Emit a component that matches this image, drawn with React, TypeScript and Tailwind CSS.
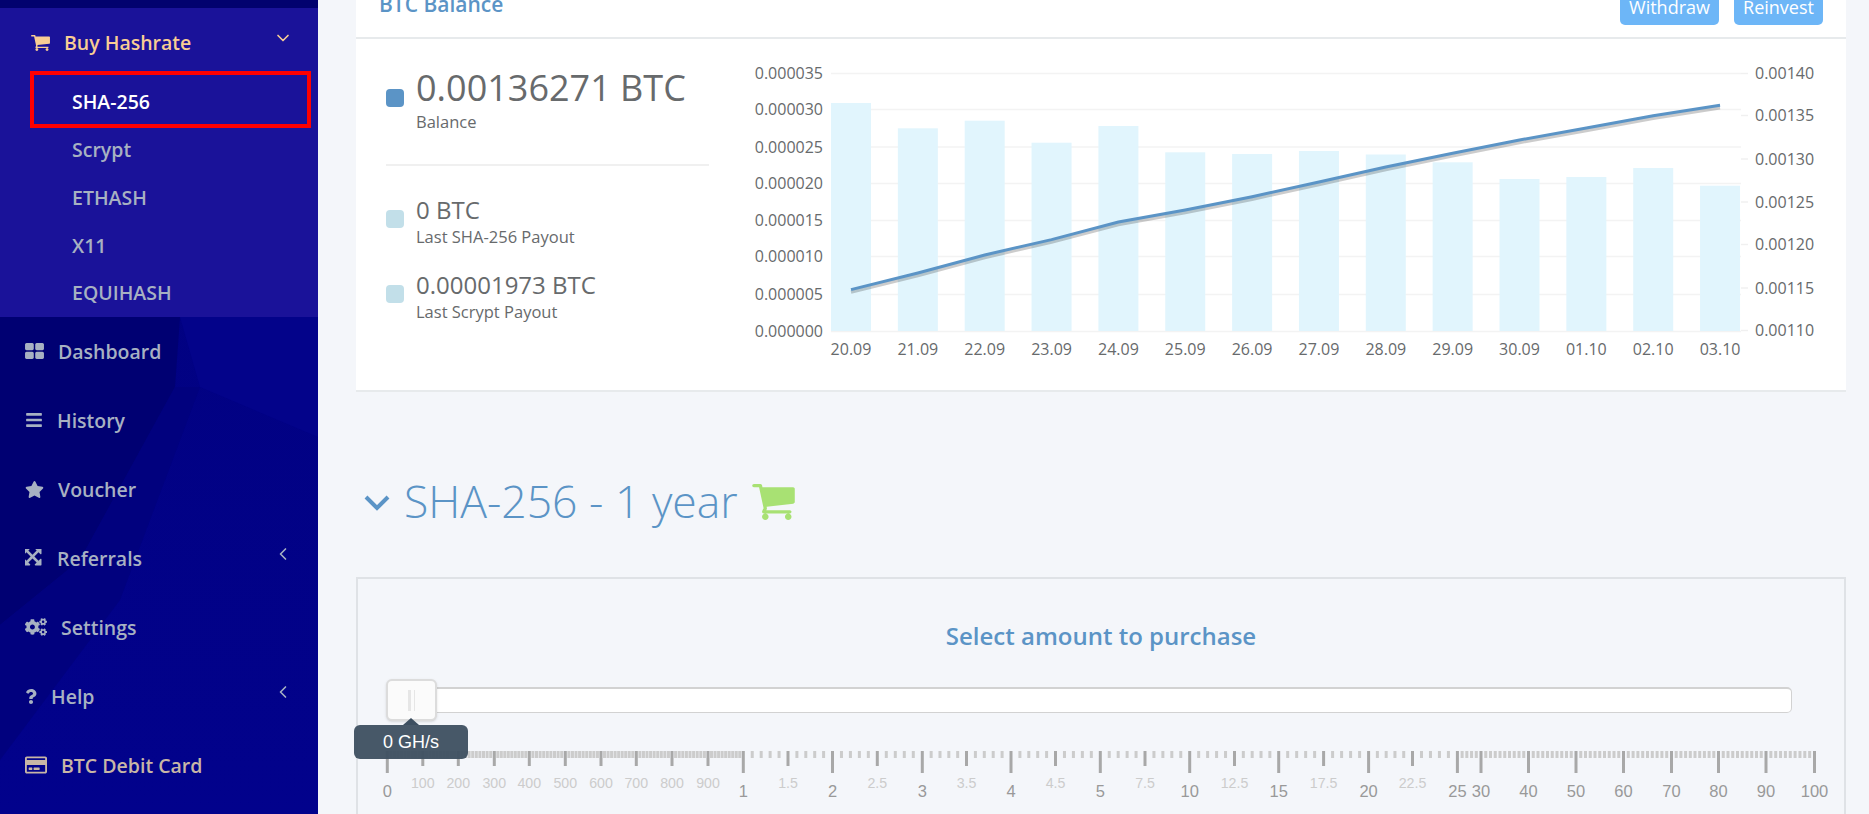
import type { ReactNode } from 'react';
import { ChevronDown, ChevronLeft } from 'lucide-react';
import { FaCogs, FaBars, FaQuestion, FaRegCreditCard, FaStar } from 'react-icons/fa';

const CART_PATH =
  'M704 1536q0 52-38 90t-90 38-90-38-38-90 38-90 90-38 90 38 38 90zm896 0q0 52-38 90t-90 38-90-38-38-90 38-90 90-38 90 38 38 90zm128-1088v512q0 24-16.5 42.5t-40.5 21.5l-1044 122q13 60 13 70 0 16-24 64h920q26 0 45 19t19 45-19 45-45 19h-1024q-26 0-45-19t-19-45q0-11 8-31.5t16-36 21.5-40 15.5-29.5l-177-823h-204q-26 0-45-19t-19-45 19-45 45-19h256q16 0 28.5 6.5t19.5 15.5 13 24.5 8 26 5.5 29.5 4.5 26h1201q26 0 45 19t19 45z';

function CartIcon({ className }: { className: string }) {
  return (
    <svg viewBox="64 256 1664 1408" fill="currentColor" className={className}>
      <path d={CART_PATH} />
    </svg>
  );
}

function GridIcon({ className }: { className: string }) {
  return (
    <svg viewBox="64 128 1664 1408" fill="currentColor" className={className}>
      <path d="M832 1024v384q0 52-38 90t-90 38h-512q-52 0-90-38t-38-90v-384q0-52 38-90t90-38h512q52 0 90 38t38 90zm0-768v384q0 52-38 90t-90 38h-512q-52 0-90-38t-38-90v-384q0-52 38-90t90-38h512q52 0 90 38t38 90zm896 768v384q0 52-38 90t-90 38h-512q-52 0-90-38t-38-90v-384q0-52 38-90t90-38h512q52 0 90 38t38 90zm0-768v384q0 52-38 90t-90 38h-512q-52 0-90-38t-38-90v-384q0-52 38-90t90-38h512q52 0 90 38t38 90z" />
    </svg>
  );
}

function ArrowsIcon({ className }: { className: string }) {
  return (
    <svg viewBox="128 128 1536 1536" fill="currentColor" className={className}>
      <path d="M1283 413l-355 355 355 355 144-144q29-31 70-14 39 17 39 59v448q0 26-19 45t-45 19h-448q-42 0-59-40-17-39 14-69l144-144-355-355-355 355 144 144q31 30 14 69-17 40-59 40h-448q-26 0-45-19t-19-45v-448q0-42 40-59 39-17 69 14l144 144 355-355-355-355-144 144q-19 19-45 19-12 0-24-5-40-17-40-59v-448q0-26 19-45t45-19h448q42 0 59 40 17 39-14 69l-144 144 355 355 355-355-144-144q-31-30-14-69 17-40 59-40h448q26 0 45 19t19 45v448q0 42-39 59-13 5-25 5-26 0-45-19z" />
    </svg>
  );
}

const SUB_ITEMS = ['SHA-256', 'Scrypt', 'ETHASH', 'X11', 'EQUIHASH'];

const NAV_ITEMS: { label: string; icon: ReactNode; arrow?: boolean; tan?: boolean }[] = [
  { label: 'Dashboard', icon: <GridIcon className="w-[19px] h-[16px] mr-[14px]" /> },
  { label: 'History', icon: <FaBars className="w-[18px] h-[18px] mr-[14px]" /> },
  { label: 'Voucher', icon: <FaStar className="w-[19px] h-[19px] mr-[14px]" /> },
  { label: 'Referrals', icon: <ArrowsIcon className="w-[18px] h-[18px] mr-[14px]" />, arrow: true },
  { label: 'Settings', icon: <FaCogs className="w-[22px] h-[22px] mr-[14px]" /> },
  { label: 'Help', icon: <FaQuestion className="w-[12px] h-[15px] mr-[14px]" />, arrow: true },
  { label: 'BTC Debit Card', icon: <FaRegCreditCard className="w-[22px] h-[22px] mr-[14px]" />, tan: true },
];

const DATES = ['20.09', '21.09', '22.09', '23.09', '24.09', '25.09', '26.09', '27.09', '28.09', '29.09', '30.09', '01.10', '02.10', '03.10'];
const BAR_TOPS = [103, 128.3, 120.7, 142.7, 126, 152.3, 154, 151, 154.5, 162.3, 179, 177, 168, 185.7];
const LINE_YS = [289.6, 273, 255, 239.6, 222, 210, 196.7, 182, 167, 153.3, 140, 128, 115.7, 105.3];
const LEFT_AXIS: [string, number][] = [
  ['0.000035', 73.5],
  ['0.000030', 109.5],
  ['0.000025', 147],
  ['0.000020', 183.5],
  ['0.000015', 220.5],
  ['0.000010', 256.5],
  ['0.000005', 294.5],
  ['0.000000', 331.5],
];
const RIGHT_AXIS: [string, number][] = [
  ['0.00140', 73.5],
  ['0.00135', 115.5],
  ['0.00130', 159],
  ['0.00125', 202],
  ['0.00120', 244.5],
  ['0.00115', 288],
  ['0.00110', 330.5],
];

const barLeft = (i: number) => 831 + i * 66.85;
const barCenter = (i: number) => barLeft(i) + 20;

function BalanceChart() {
  const points = LINE_YS.map((y, i) => `${barCenter(i)},${y}`).join(' ');
  const shadow = LINE_YS.map((y, i) => `${barCenter(i)},${y + 2.5}`).join(' ');
  return (
    <svg width={1106} height={351} viewBox="740 39 1106 351" className="block shrink-0">
      {LEFT_AXIS.map(([, y]) => (
        <line key={y} x1={831} x2={1741} y1={y} y2={y} stroke="#f3f3f3" strokeWidth={1.5} />
      ))}
      {BAR_TOPS.map((top, i) => (
        <rect key={i} x={barLeft(i)} y={top} width={40} height={331 - top} fill="#e1f5fd" />
      ))}
      {RIGHT_AXIS.map(([, y]) => (
        <line key={y} x1={1741} x2={1748} y1={y} y2={y} stroke="#f0f0f0" strokeWidth={1.5} />
      ))}
      <polyline points={shadow} fill="none" stroke="#000" strokeOpacity={0.2} strokeWidth={3.5} />
      <polyline points={points} fill="none" stroke="#5b94c6" strokeWidth={3} />
      {LEFT_AXIS.map(([label, y]) => (
        <text key={label} x={823} y={y + 5.5} textAnchor="end" fontSize={16} fill="#676a6c">{label}</text>
      ))}
      {RIGHT_AXIS.map(([label, y]) => (
        <text key={label} x={1755} y={y + 5.5} fontSize={16} fill="#676a6c">{label}</text>
      ))}
      {DATES.map((d, i) => (
        <text key={d} x={barCenter(i)} y={355} textAnchor="middle" fontSize={16} fill="#676a6c">{d}</text>
      ))}
    </svg>
  );
}

// x on the page, label, tick kind (b big, m medium), small ticks up to the next mark
const MARKS: [number, string, 'b' | 'm', number][] = [
  [387.3, '0', 'b', 9],
  [422.8, '100', 'm', 9],
  [458.3, '200', 'm', 9],
  [494.3, '300', 'm', 9],
  [529.3, '400', 'm', 9],
  [565.3, '500', 'm', 9],
  [601, '600', 'm', 9],
  [636.3, '700', 'm', 9],
  [672, '800', 'm', 9],
  [708, '900', 'm', 9],
  [743.3, '1', 'b', 4],
  [788, '1.5', 'm', 4],
  [832.5, '2', 'b', 4],
  [877.3, '2.5', 'm', 4],
  [922.3, '3', 'b', 4],
  [966.5, '3.5', 'm', 4],
  [1011, '4', 'b', 4],
  [1055.5, '4.5', 'm', 4],
  [1100.3, '5', 'b', 4],
  [1145, '7.5', 'm', 4],
  [1189.7, '10', 'b', 4],
  [1234.5, '12.5', 'm', 4],
  [1278.7, '15', 'b', 4],
  [1323.6, '17.5', 'm', 4],
  [1368.6, '20', 'b', 4],
  [1412.5, '22.5', 'm', 4],
  [1457.4, '25', 'b', 4],
  [1481, '30', 'b', 9],
  [1528.5, '40', 'b', 9],
  [1576, '50', 'b', 9],
  [1623.5, '60', 'b', 9],
  [1671.5, '70', 'b', 9],
  [1718.5, '80', 'b', 9],
  [1766, '90', 'b', 9],
  [1814.5, '100', 'b', 0],
];

function Ruler() {
  return (
    <svg width={1480} height={70} viewBox="360 745 1480 70" className="block font-['Liberation_Sans',Arial,sans-serif]">
      {MARKS.map(([x, label, kind, small], i) => {
        const next = i + 1 < MARKS.length ? MARKS[i + 1][0] : x;
        const step = (next - x) / (small + 1);
        return (
          <g key={i}>
            {Array.from({ length: small }, (_, s) => (
              <rect key={s} x={x + step * (s + 1) - 1.5} y={751} width={3} height={7} fill="#cccccc" />
            ))}
            <rect x={x - 1.5} y={751} width={3} height={kind === 'b' ? 22 : 15} fill="#a8a8a8" />
            {kind === 'b' ? (
              <text x={x} y={796.5} textAnchor="middle" fontSize={16.5} fill="#999999">{label}</text>
            ) : (
              <text x={x} y={788} textAnchor="middle" fontSize={14.2} fill="#cccccc">{label}</text>
            )}
          </g>
        );
      })}
    </svg>
  );
}

function Stat({ value, label, big }: { value: string; label: string; big?: boolean }) {
  return (
    <div className="flex items-start">
      <div className={`w-[18px] h-[18px] rounded-[4px] shrink-0 mr-[12px] ${big ? 'bg-[#5b94c6] mt-[24px]' : 'bg-[#c2dfe9] mt-[17px]'}`} />
      <div>
        <div className={big ? 'text-[36px] leading-[46px]' : 'text-[24px] leading-[33px]'}>{value}</div>
        <div className="text-[16.5px] leading-[20px] mt-[1px]">{label}</div>
      </div>
    </div>
  );
}

function Sidebar() {
  return (
    <aside className="relative w-[318px] shrink-0 h-[814px] overflow-hidden bg-gradient-to-b from-[#01017c] to-[#02028c] text-[#a7b1c2] text-[19.5px] font-semibold">
      <svg width={318} height={814} className="absolute inset-0">
        <polygon points="180,317 318,317 318,437 200,387" fill="#03038a" />
        <polygon points="0,317 180,317 175,387 80,560 0,625" fill="#000072" />
        <polygon points="0,625 80,560 175,387 200,387 120,600 0,760" fill="#01017e" />
      </svg>
      <div className="relative">
        <div className="h-[8px] bg-[#02026e]" />
        <div className="bg-[#1a1299] relative">
          <div className="h-[70px] flex items-center pl-[31px] text-[#f8cd94]">
            <CartIcon className="w-[19px] h-[16px] mr-[14px]" />
            <span>Buy Hashrate</span>
            <ChevronDown className="ml-auto mr-[25px] mb-[10px] w-[20px] h-[20px]" strokeWidth={2} />
          </div>
          {SUB_ITEMS.map((s, i) => (
            <div key={s} className={`h-[47.8px] flex items-center pl-[72px] ${i === 0 ? 'text-white' : ''}`}>{s}</div>
          ))}
          <div className="absolute left-[30px] top-[63px] w-[281px] h-[57px] border-[4px] border-[#ff0000]" />
        </div>
        {NAV_ITEMS.map((n) => (
          <div key={n.label} className={`h-[69px] flex items-center pl-[25px] ${n.tan ? 'text-[#c8b6a6]' : ''}`}>
            {n.icon}
            <span>{n.label}</span>
            {n.arrow && <ChevronLeft className="ml-auto mr-[25px] mb-[8px] w-[20px] h-[20px]" strokeWidth={2} />}
          </div>
        ))}
      </div>
    </aside>
  );
}

export default function App() {
  return (
    <div className="flex w-[1869px] h-[814px] overflow-hidden bg-[#f4f6fa] font-['Open_Sans',sans-serif] text-[#676a6c]">
      <Sidebar />
      <main className="flex-1 min-w-0 pl-[38px] pr-[23px]">
        <section className="-mt-[20px] bg-white border-b-2 border-[#e7eaec]">
          <div className="h-[59px] border-b-2 border-[#e7eaec] flex justify-between px-[23px]">
            <h2 className="text-[21px] font-semibold text-[#5b94c6] leading-[28px] pt-[10px]">BTC Balance</h2>
            <div className="flex gap-[15px] text-white text-[18px] h-[45px]">
              <button className="w-[99px] bg-[#6db6f7] rounded-[5px] pt-[10px]">Withdraw</button>
              <button className="w-[89px] bg-[#6db6f7] rounded-[5px] pt-[10px]">Reinvest</button>
            </div>
          </div>
          <div className="flex">
            <div className="w-[384px] pl-[30px] pr-[31px] pt-[26px]">
              <Stat big value="0.00136271 BTC" label="Balance" />
              <div className="h-[2px] bg-[#f0f0f0] mt-[32px] mb-[27px]" />
              <div className="flex flex-col gap-[21px]">
                <Stat value="0 BTC" label="Last SHA-256 Payout" />
                <Stat value="0.00001973 BTC" label="Last Scrypt Payout" />
              </div>
            </div>
            <BalanceChart />
          </div>
        </section>

        <h1 className="flex items-center h-[185px] pt-[34px] pl-[7px] text-[44.5px] font-light text-[#5b94c6] leading-none">
          <svg width={28} height={18} viewBox="0 0 28 18" fill="none" className="mr-[13px] mt-[2px]">
            <path d="M3 3 L14 14 L25 3" stroke="currentColor" strokeWidth={4} />
          </svg>
          <span>SHA-256 - 1 year</span>
          <CartIcon className="w-[43px] h-[36px] ml-[14px] text-[#a8e173]" />
        </h1>

        <div className="h-[400px] border-2 border-[#dfe2e6] pt-[41px]">
          <h3 className="text-center text-[24px] font-semibold text-[#5b94c6] leading-[32px]">Select amount to purchase</h3>
          <div className="relative mt-[35px]">
            <div className="ml-[28px] w-[1406px] h-[26px] bg-white rounded-[5px] border border-t-2 border-[#d2d2d2]" />
            <div className="absolute left-[28px] -top-[8px] w-[51px] h-[42px] bg-[#fbfbfb] rounded-[6px] border-[2px] border-[#dcdcdc] shadow-sm flex justify-center items-center gap-[3px]">
              <div className="w-[3px] h-[21px] bg-[#e6e6e6]" />
              <div className="w-[1px] h-[21px] bg-[#e6e6e6]" />
            </div>
            <div className="absolute z-10 left-[-4px] top-[38px] w-[114px] h-[34px] rounded-[6px] bg-[#3d4f60]/95 text-white text-[18px] font-['Liberation_Sans',Arial,sans-serif] flex items-center justify-center">
              <div className="absolute left-[49px] -top-[7px] w-0 h-0 border-x-[8px] border-x-transparent border-b-[7px] border-b-[#3d4f60]" />
              0 GH/s
            </div>
            <div className="mt-[32px] ml-[2px]">
              <Ruler />
            </div>
          </div>
        </div>
      </main>
    </div>
  );
}
